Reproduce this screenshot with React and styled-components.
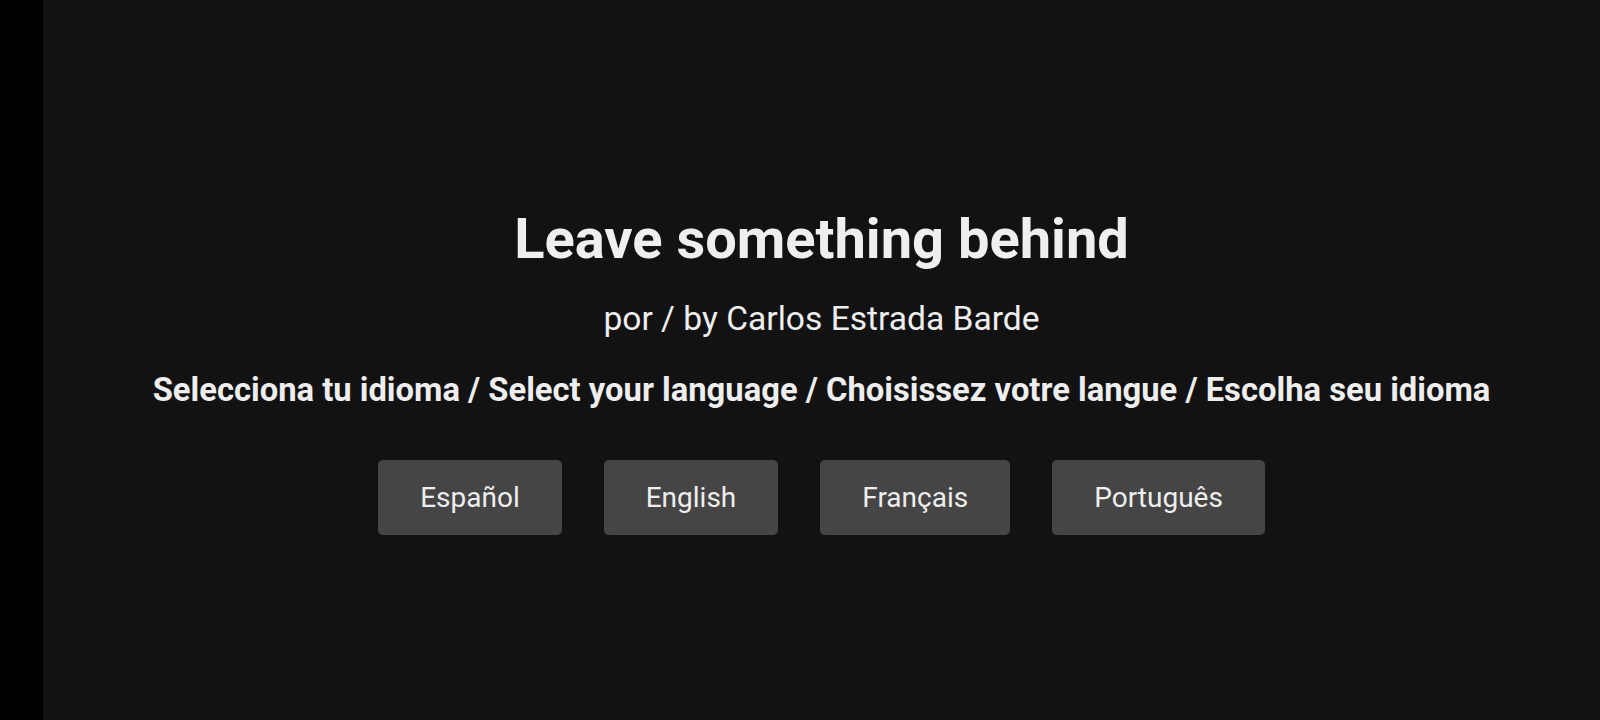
import React from "react";
import styled, { createGlobalStyle } from "styled-components";

const languages = ["Español", "English", "Français", "Português"];

const App = () => {
  return (
    <>
      <GlobalStyle />
      <Page>
        <Strip />
        <Main>
          <Content>
            <Title>Leave something behind</Title>
            <Author>por / by Carlos Estrada Barde</Author>
            <Prompt>
              Selecciona tu idioma / Select your language / Choisissez votre langue / Escolha seu idioma
            </Prompt>
            <Buttons>
              {languages.map((lang) => (
                <LangButton key={lang}>{lang}</LangButton>
              ))}
            </Buttons>
          </Content>
        </Main>
      </Page>
    </>
  );
};

export default App;

const GlobalStyle = createGlobalStyle`
  html, body {
    margin: 0;
    padding: 0;
    background: #121212;
  }
  body {
    font-family: Roboto, "Liberation Sans", sans-serif;
    color: #eeeeee;
  }
`;

const Page = styled.div`
  display: flex;
  min-height: 100vh;
`;

const Strip = styled.div`
  width: 43px;
  flex-shrink: 0;
  background: #000;
`;

const Main = styled.main`
  flex: 1;
  display: flex;
  flex-direction: column;
  align-items: center;
  justify-content: center;
  padding-top: 20.6px;
  background: #121212;
`;

const Content = styled.div`
  display: flex;
  flex-direction: column;
  align-items: center;
  text-align: center;
`;

const Title = styled.h1`
  margin: 0;
  font-size: 56px;
  line-height: 1.2;
  font-weight: 700;
  color: #efefef;
`;

const Author = styled.p`
  margin: 26.6px 0 0;
  font-size: 33.6px;
  line-height: 1.2;
  font-weight: 400;
`;

const Prompt = styled.h2`
  margin: 31.5px 0 0;
  font-size: 32.75px;
  line-height: 1.2;
  font-weight: 700;
`;

const Buttons = styled.div`
  display: flex;
  gap: 42px;
  margin-top: 49.5px;
`;

const LangButton = styled.button`
  background: #454545;
  color: #eeeeee;
  border: none;
  border-radius: 5px;
  padding: 21px 42px;
  font-family: Roboto, "Liberation Sans", sans-serif;
  font-size: 28px;
  line-height: 33px;
  cursor: pointer;
`;
